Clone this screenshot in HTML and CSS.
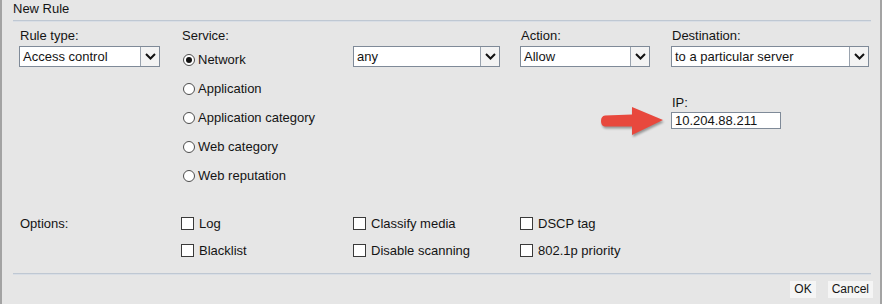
FILE: index.html
```html
<!DOCTYPE html>
<html lang="en">
<head>
    <meta charset="UTF-8">
    <title>New Rule</title>
    <link rel="stylesheet" href="styles.css">
</head>
<body>
    <div class="dialog">
        <div class="dialog-title">New Rule</div>
        <div class="rule-line"></div>

        <div class="rule-grid">
            <div class="field-label">Rule type:</div>
            <div class="field-label">Service:</div>
            <div class="field-label"></div>
            <div class="field-label">Action:</div>
            <div class="field-label">Destination:</div>

            <div class="col">
                <div class="combo combo-type">
                    <span class="combo-text">Access control</span>
                    <span class="combo-btn"><svg width="11" height="7" viewBox="0 0 11 7"><path d="M1 1 L5.5 5.5 L10 1" fill="none" stroke="#111" stroke-width="2"/></svg></span>
                </div>
            </div>

            <div class="radio-list">
                <label class="radio-item"><span class="radio checked"></span>Network</label>
                <label class="radio-item"><span class="radio"></span>Application</label>
                <label class="radio-item"><span class="radio"></span>Application category</label>
                <label class="radio-item"><span class="radio"></span>Web category</label>
                <label class="radio-item"><span class="radio"></span>Web reputation</label>
            </div>

            <div class="col">
                <div class="combo combo-service">
                    <span class="combo-text">any</span>
                    <span class="combo-btn"><svg width="11" height="7" viewBox="0 0 11 7"><path d="M1 1 L5.5 5.5 L10 1" fill="none" stroke="#111" stroke-width="2"/></svg></span>
                </div>
            </div>

            <div class="col">
                <div class="combo combo-action">
                    <span class="combo-text">Allow</span>
                    <span class="combo-btn"><svg width="11" height="7" viewBox="0 0 11 7"><path d="M1 1 L5.5 5.5 L10 1" fill="none" stroke="#111" stroke-width="2"/></svg></span>
                </div>
            </div>

            <div class="col">
                <div class="combo combo-dest">
                    <span class="combo-text">to a particular server</span>
                    <span class="combo-btn"><svg width="11" height="7" viewBox="0 0 11 7"><path d="M1 1 L5.5 5.5 L10 1" fill="none" stroke="#111" stroke-width="2"/></svg></span>
                </div>
                <div class="ip-field">
                    <svg class="red-arrow" width="70" height="36" viewBox="0 0 70 36">
                        <path d="M4 9.5 L31 8.5 L31 1 L62 14 L31 29 L31 20.5 L4 20.5 Q0 20 0 15 Q0 10 4 9.5 Z" fill="#e8483d"/>
                    </svg>
                    <div class="field-label">IP:</div>
                    <div class="text-input">10.204.88.211</div>
                </div>
            </div>
        </div>

        <div class="options-grid">
            <div class="field-label options-label">Options:</div>
            <label class="check-item"><span class="checkbox"></span>Log</label>
            <label class="check-item"><span class="checkbox"></span>Classify media</label>
            <label class="check-item"><span class="checkbox"></span>DSCP tag</label>
            <label class="check-item"><span class="checkbox"></span>Blacklist</label>
            <label class="check-item"><span class="checkbox"></span>Disable scanning</label>
            <label class="check-item"><span class="checkbox"></span>802.1p priority</label>
        </div>

        <div class="rule-line bottom-line"></div>

        <div class="dialog-buttons">
            <button class="btn">OK</button>
            <button class="btn">Cancel</button>
        </div>
    </div>
</body>
</html>
```

FILE: styles.css
```css
:root {
    --bg: #e6e6e6;
    --text: #141414;
    --field-border: #7f8a98;
    --line: #c4ccd6;
}
body {
    margin: 0;
    background: #ffffff;
    font-family: "Liberation Sans", Arial, sans-serif;
    font-size: 13px;
    color: var(--text);
}
.dialog {
    width: 878px;
    height: 304px;
    background: var(--bg);
    border-left: 2px solid #a3a3a3;
    border-right: 2px solid #a3a3a3;
    box-sizing: content-box;
}
.dialog-title { height: 16px; line-height: 16px; padding: 1px 0 0 11px; margin-bottom: 3px; }
.rule-line { height: 0; margin: 0 9px 0 11px; border-top: 1px solid #bfc8d3; border-bottom: 1px solid #d9dee5; }

.rule-grid {
    display: grid;
    grid-template-columns: 162px 172px 167px 151px 198px;
    grid-template-rows: 16px auto;
    row-gap: 2px;
    padding: 6px 0 0 17px;
}
.field-label { line-height: 16px; height: 16px; padding-left: 1px; }
.col { display: flex; flex-direction: column; }

.combo {
    display: flex;
    height: 21px;
    box-sizing: border-box;
    border: 1px solid var(--field-border);
    background: #fff;
}
.combo-type { width: 141px; }
.combo-service { width: 147px; }
.combo-action { width: 130px; }
.combo-dest { width: 198px; }
.combo-text { flex: 1; line-height: 19px; padding-left: 3px; white-space: nowrap; overflow: hidden; }
.combo-btn {
    width: 18px;
    border-left: 1px solid #9aa3ae;
    background: #f3f3f3;
    display: flex;
    align-items: center;
    justify-content: center;
}

.radio-list { display: flex; flex-direction: column; margin-top: -1px; }
.radio-item { display: flex; align-items: center; height: 29px; gap: 3px; padding-left: 2px; }
.radio {
    width: 12px;
    height: 12px;
    box-sizing: border-box;
    border: 1px solid #4d4d4d;
    border-radius: 50%;
    background: #fff;
    position: relative;
}
.radio.checked::after {
    content: "";
    position: absolute;
    left: 2px;
    top: 2px;
    width: 6px;
    height: 6px;
    border-radius: 50%;
    background: #111;
}

.ip-field { position: relative; margin-top: 28px; }
.ip-field .field-label { margin-bottom: 1px; }
.text-input {
    width: 110px;
    height: 17px;
    box-sizing: border-box;
    border: 1px solid var(--field-border);
    background: #fff;
    line-height: 15px;
    padding-left: 3px;
}
.red-arrow {
    position: absolute;
    left: -70px;
    top: 11px;
    filter: drop-shadow(1px 2px 1px rgba(0,0,0,0.35));
}

.options-grid {
    display: grid;
    grid-template-columns: 162px 172px 167px auto;
    grid-auto-rows: 27px;
    padding: 20px 0 0 17px;
}
.options-label { grid-row: span 2; line-height: 27px; height: auto; }
.check-item { display: flex; align-items: center; gap: 5px; }
.checkbox {
    width: 13px;
    height: 13px;
    box-sizing: border-box;
    border: 1px solid #3a3a3a;
    background: #fff;
}

.bottom-line { margin-top: 9px; }

.dialog-buttons { display: flex; justify-content: flex-end; gap: 12px; padding: 6px 7px 0 0; }
.btn {
    height: 17px;
    padding: 0 4px;
    border: none;
    background: #f5f5f5;
    font-family: "Liberation Sans", Arial, sans-serif;
    font-size: 12px;
    color: var(--text);
    line-height: 17px;
}
```
